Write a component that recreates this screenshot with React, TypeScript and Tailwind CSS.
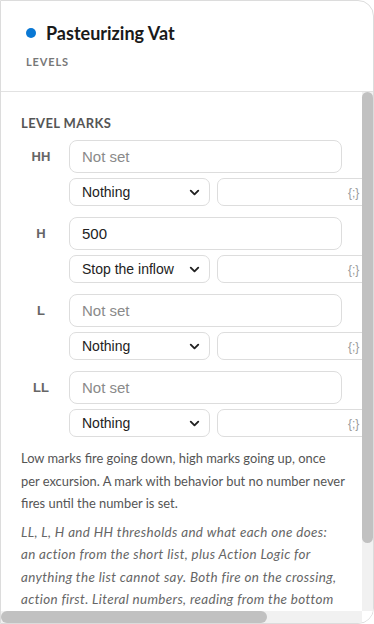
import { ChevronDown } from 'lucide-react';

type Mark = {
  label: string;
  value: string;
  action: string;
};

const marks: Mark[] = [
  { label: 'HH', value: '', action: 'Nothing' },
  { label: 'H', value: '500', action: 'Stop the inflow' },
  { label: 'L', value: '', action: 'Nothing' },
  { label: 'LL', value: '', action: 'Nothing' },
];

function MarkRow({ mark }: { mark: Mark }) {
  return (
    <div className="flex items-start gap-[8px]">
      <div className="flex h-[33px] w-[40px] shrink-0 items-center justify-center font-['Liberation_Sans',Arial,sans-serif] text-[13px] font-bold text-[#666]">
        {mark.label}
      </div>
      <div className="flex min-w-0 flex-1 flex-col gap-[5px]">
        <input
          defaultValue={mark.value}
          placeholder="Not set"
          className="h-[33px] w-full rounded-[8px] border border-[#dddddd] bg-white px-[12px] font-['Liberation_Sans',Arial,sans-serif] text-[15px] text-[#222] outline-none placeholder:text-[#8a8a8a]"
        />
        <div className="flex gap-[7px]">
          <div className="relative h-[28px] w-[141px] shrink-0">
            <select
              defaultValue={mark.action}
              className="h-full w-full appearance-none rounded-[7px] border border-[#dddddd] bg-white pl-[12px] pr-[28px] font-['Liberation_Sans',Arial,sans-serif] text-[14px] text-[#222] outline-none"
            >
              <option>Nothing</option>
              <option>Stop the inflow</option>
              <option>Stop the outflow</option>
              <option>Raise an alarm</option>
            </select>
            <ChevronDown
              size={15}
              strokeWidth={3}
              className="pointer-events-none absolute right-[8px] top-[7px] text-[#222]"
            />
          </div>
          <div className="relative h-[28px] w-[256px] shrink-0 rounded-[7px] border border-[#dddddd] bg-white">
            <span className="absolute left-[130px] top-[5px] font-['Liberation_Sans',Arial,sans-serif] text-[12px] text-[#999]">
              {'{;}'}
            </span>
          </div>
        </div>
      </div>
    </div>
  );
}

export default function App() {
  return (
    <div className="flex h-[624px] w-[374px] flex-col overflow-hidden rounded-r-[16px] border border-[#dcdcdc] bg-white font-['Lato','Open_Sans',sans-serif]">
      <div className="h-[91px] shrink-0 border-b border-[#e2e2e2] pl-[25px] pt-[19px]">
        <div className="flex items-center gap-[10px]">
          <span className="h-[10px] w-[10px] rounded-full bg-[#0a78d4]" />
          <h1 className="text-[18px] leading-[26px] font-bold text-[#1a1a1a]">
            Pasteurizing Vat
          </h1>
        </div>
        <div className="mt-[10px] text-[11px] leading-[12px] font-bold tracking-[0.08em] text-[#777]">
          LEVELS
        </div>
      </div>

      <div className="flex min-h-0 flex-1 flex-col">
        <div className="flex min-h-0 flex-1">
          <div className="min-w-0 flex-1 overflow-hidden">
            <div className="px-[20px] pt-[23px]">
              <div className="text-[13px] leading-[16px] font-bold tracking-[0.03em] text-[#555]">
                LEVEL MARKS
              </div>
              <div className="mt-[9px] flex flex-col gap-[11px]">
                {marks.map((m) => (
                  <MarkRow key={m.label} mark={m} />
                ))}
              </div>
              <p className="mt-[10px] text-[12.9px] leading-[22.5px] whitespace-nowrap text-[#555]">
                Low marks fire going down, high marks going up, once
                <br />
                per excursion. A mark with behavior but no number never
                <br />
                fires until the number is set.
              </p>
              <p className="mt-[6px] text-[13.4px] leading-[22.5px] tracking-[0.35px] whitespace-nowrap text-[#666] italic">
                LL, L, H and HH thresholds and what each one does:
                <br />
                an action from the short list, plus Action Logic for
                <br />
                anything the list cannot say. Both fire on the crossing,
                <br />
                action first. Literal numbers, reading from the bottom
              </p>
            </div>
          </div>
          <div className="flex w-[11px] shrink-0 flex-col bg-[#f1f1f1]">
            <div className="h-[451px] rounded-full bg-[#c1c1c1]" />
          </div>
        </div>
        <div className="flex h-[12px] shrink-0">
          <div className="flex-1 bg-[#f1f1f1]">
            <div className="h-full w-[266px] rounded-full bg-[#c1c1c1]" />
          </div>
          <div className="w-[11px] bg-white" />
        </div>
      </div>
    </div>
  );
}
